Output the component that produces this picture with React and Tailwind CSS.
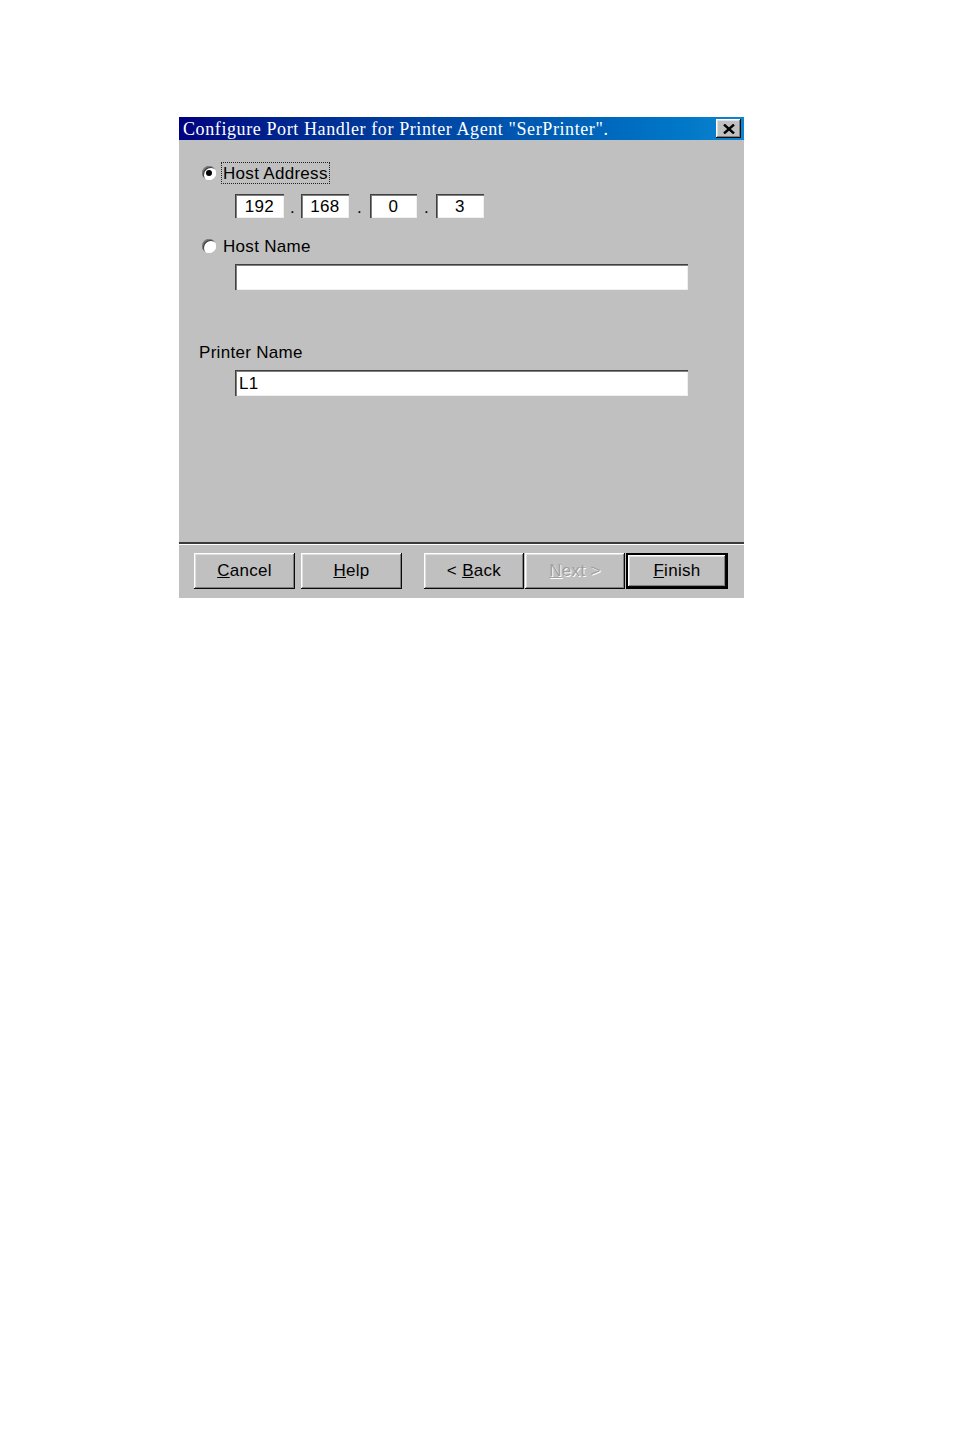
import React from "react";

const raised =
  "bg-[#c0c0c0] shadow-[inset_-1px_-1px_0_#0a0a0a,inset_1px_1px_0_#ffffff,inset_-2px_-2px_0_#808080,inset_2px_2px_0_#dfdfdf]";
const sunken =
  "bg-white shadow-[inset_1px_1px_0_#404040,inset_2px_2px_0_#808080,inset_-1px_-1px_0_#f0f0f0]";

function Radio({ checked }) {
  return (
    <span className="relative inline-block w-[14px] h-[14px] rounded-full bg-white shadow-[inset_1px_1px_0_#808080,inset_2px_2px_0_#404040,inset_-1px_-1px_0_#ffffff]">
      {checked && (
        <span className="absolute left-[4px] top-[4px] w-[6px] h-[6px] rounded-full bg-black" />
      )}
    </span>
  );
}

function IpBox({ v, w = "49px" }) {
  return (
    <div className={`${sunken} h-[24px] flex items-center justify-center text-[17px] leading-none`} style={{ width: w }}>
      {v}
    </div>
  );
}

function Dot({ w }) {
  return (
    <div className="h-[24px] flex items-end justify-center text-[17px] leading-[20px]" style={{ width: w }}>
      .
    </div>
  );
}

function Btn({ children, w, className = "" }) {
  return (
    <div className={`${raised} h-[36px] flex items-center justify-center text-[17px] ${className}`} style={{ width: w }}>
      {children}
    </div>
  );
}

export default function App() {
  return (
    <div className="min-h-[1431px] bg-white pt-[117px] pl-[179px] tracking-[0.3px]" style={{ fontFamily: '"Liberation Sans", Arial, sans-serif' }}>
      <div className="w-[565px] h-[481px] bg-[#c0c0c0] flex flex-col text-black">
        {/* Title bar */}
        <div className="h-[23px] flex items-center justify-between pl-[4px] pr-[3px] bg-gradient-to-r from-[#000080] to-[#1084d0]">
          <span className="text-white text-[18px] leading-none whitespace-nowrap tracking-[0.6px]" style={{ fontFamily: '"Liberation Serif", "Times New Roman", serif' }}>
            Configure Port Handler for Printer Agent "SerPrinter".
          </span>
          <div className={`${raised} w-[25px] h-[19px] flex items-center justify-center`}>
            <svg width="12" height="10" viewBox="0 0 12 10">
              <path d="M1 0.5 L11 9.5 M11 0.5 L1 9.5" stroke="#000" strokeWidth="2.4" />
            </svg>
          </div>
        </div>

        {/* Body */}
        <div className="flex-1 flex flex-col">
          <div className="pt-[23px] pl-[23px]">
            <div className="flex items-center h-[20px]">
              <Radio checked />
              <span className="ml-[6px] px-[1px] h-[20px] flex items-center outline outline-1 outline-dotted outline-[#202020] text-[17px] leading-none">
                Host Address
              </span>
            </div>
            <div className="mt-[11px] ml-[33px] flex">
              <IpBox v="192" />
              <Dot w="17px" />
              <IpBox v="168" w="48px" />
              <Dot w="21px" />
              <IpBox v="0" w="47px" />
              <Dot w="19px" />
              <IpBox v="3" w="48px" />
            </div>
            <div className="mt-[18px] flex items-center h-[20px]">
              <Radio />
              <span className="ml-[7px] text-[17px] leading-none">Host Name</span>
            </div>
            <div className={`${sunken} mt-[8px] ml-[33px] w-[453px] h-[26px]`} />
          </div>

          <div className="pl-[20px] mt-[53px] text-[17px] leading-[20px]">Printer Name</div>
          <div className={`${sunken} mt-[7px] ml-[56px] w-[453px] h-[26px] flex items-center pl-[4px] text-[17px] leading-none`}>
            L1
          </div>

          <div className="mt-auto border-t-2 border-[#3a3a3a]" />
          <div className="border-t border-white" />
          <div className="h-[53px] flex items-start pt-[8px] pl-[15px]">
            <Btn w="101px">
              <span><span className="underline">C</span>ancel</span>
            </Btn>
            <Btn w="101px" className="ml-[6px]">
              <span><span className="underline">H</span>elp</span>
            </Btn>
            <Btn w="100px" className="ml-[22px]">
              <span>&lt; <span className="underline">B</span>ack</span>
            </Btn>
            <Btn w="100px" className="ml-[1px] text-[#a0a0a0] [text-shadow:1px_1px_0_#ffffff]">
              <span><span className="underline">N</span>ext &gt;</span>
            </Btn>
            <div className="ml-[1px] w-[102px] h-[36px] border-2 border-black">
              <div className={`${raised} w-full h-full flex items-center justify-center text-[17px]`}>
                <span><span className="underline">F</span>inish</span>
              </div>
            </div>
          </div>
        </div>
      </div>
    </div>
  );
}
